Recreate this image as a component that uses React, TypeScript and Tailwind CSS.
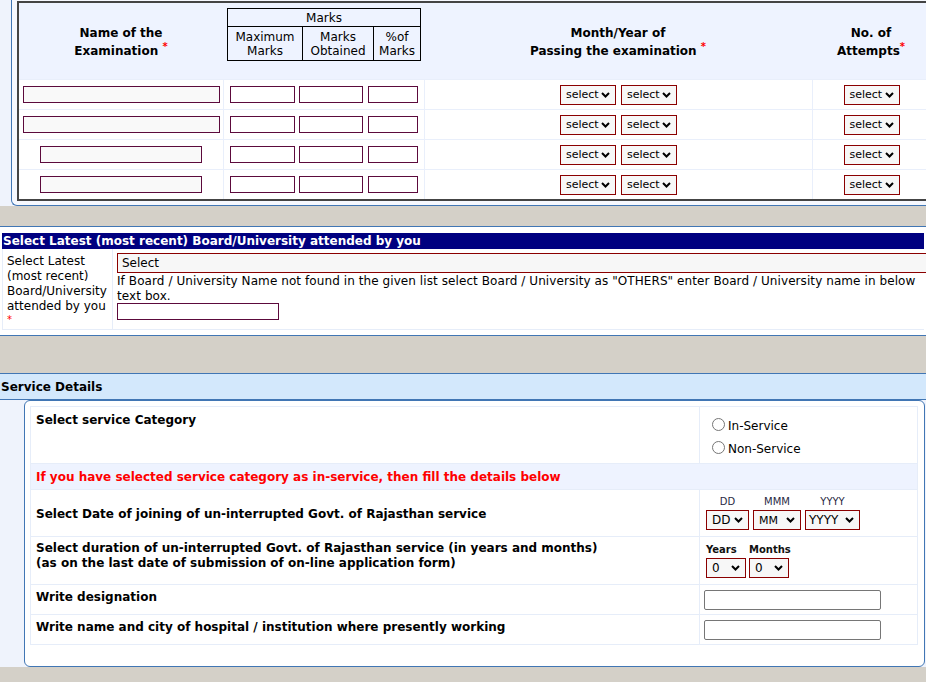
import React from 'react';

function Chev() {
  return (
    <svg width="9" height="6" viewBox="0 0 9 6" className="shrink-0">
      <path d="M1 1 L4.5 4.5 L8 1" fill="none" stroke="#000" strokeWidth="2" />
    </svg>
  );
}

function Sel({ text, className }: { text: string; className: string }) {
  return (
    <div
      className={`flex h-[20px] items-center justify-between border border-[#8b0000] bg-[#f7f7f7] pl-[5px] pr-[5px] leading-none text-black ${className}`}
    >
      <span>{text}</span>
      <Chev />
    </div>
  );
}

function Star({ className = '' }: { className?: string }) {
  return <span className={`relative -top-[5px] text-[10px] text-[#ff0000] ${className}`}>*</span>;
}

export default function App() {
  const rows = [0, 1, 2, 3];
  return (
    <div className="h-[682px] w-[926px] overflow-hidden bg-[#d4d0c8] font-['DejaVu_Sans',sans-serif] text-[12px] text-black">
      {/* Top examination table */}
      <div className="bg-[#eff3fc] pl-[11px]">
        <div className="rounded-bl-[6px] border-b border-l border-[#4176b4] bg-[#f6f8fe] pb-[4px] pl-[5px]">
          <div className="h-[1px]" />
          <div className="w-[915px] border-2 border-[#444] bg-white">
            <div className="grid h-[76px] grid-cols-[204px_201px_388px_118px] bg-[#eef3ff]">
              <div className="flex items-center justify-center pt-[2px] text-center font-bold leading-[18px]">
                <div>
                  Name of the
                  <br />
                  Examination <Star />
                </div>
              </div>
              <div>
                <div className="ml-[4px] mt-[5px] w-[194px] border border-black leading-[14px]">
                  <div className="h-[18px] border-b border-black pt-[1px] text-center leading-[17px]">Marks</div>
                  <div className="grid h-[33px] grid-cols-[75px_71px_1fr]">
                    <div className="border-r border-black pt-[3px] text-center">
                      Maximum
                      <br />
                      Marks
                    </div>
                    <div className="border-r border-black pt-[3px] text-center">
                      Marks
                      <br />
                      Obtained
                    </div>
                    <div className="pt-[3px] text-center">
                      %of
                      <br />
                      Marks
                    </div>
                  </div>
                </div>
              </div>
              <div className="flex items-center justify-center pt-[2px] text-center font-bold leading-[18px]">
                <div>
                  Month/Year of
                  <br />
                  Passing the examination <Star />
                </div>
              </div>
              <div className="flex items-center justify-center pt-[2px] text-center font-bold leading-[18px]">
                <div>
                  No. of
                  <br />
                  Attempts
                  <Star />
                </div>
              </div>
            </div>
            {rows.map((i) => (
              <div
                key={i}
                className="grid h-[30px] grid-cols-[204px_201px_388px_118px] border-t border-[#e9effb]"
              >
                <div className="flex items-center justify-center">
                  <div
                    className={
                      i < 2
                        ? 'h-[17px] w-[197px] border border-[#5c0a3c] bg-[#f9f9f9]'
                        : 'h-[17px] w-[162px] border border-[#5c0a3c] bg-[#f9f9f9]'
                    }
                  />
                </div>
                <div className="flex items-center border-l border-[#e9effb] pl-[6px]">
                  <div className="h-[17px] w-[65px] border border-[#5c0a3c] bg-white" />
                  <div className="ml-[4px] h-[17px] w-[64px] border border-[#5c0a3c] bg-white" />
                  <div className="ml-[5px] h-[17px] w-[50px] border border-[#5c0a3c] bg-white" />
                </div>
                <div className="flex items-center justify-center gap-[5px] border-l border-[#e9effb]">
                  <Sel text="select" className="w-[56px] text-[11px]" />
                  <Sel text="select" className="w-[56px] text-[11px]" />
                </div>
                <div className="flex items-center justify-center border-l border-[#e9effb]">
                  <Sel text="select" className="w-[56px] text-[11px]" />
                </div>
              </div>
            ))}
          </div>
        </div>
      </div>

      <div className="h-[20px]" />

      {/* Board / University */}
      <div className="border-y border-[#4176b4] bg-white px-[2px] pb-[5px] pt-[6px]">
        <div className="h-[16px] whitespace-nowrap bg-[#000080] pl-[1px] font-bold leading-[16px] text-white">
          Select Latest (most recent) Board/University attended by you
        </div>
        <div className="grid grid-cols-[110px_1fr] border-b border-l border-[#e6edf9]">
          <div className="h-[80px] border-r border-[#e6edf9] pl-[4px] pt-[5px] leading-[15px]">
            Select Latest
            <br />
            (most recent)
            <br />
            Board/University
            <br />
            attended by you
            <br />
            <span className="relative -top-[2px] text-[10px] text-[#ff0000]">*</span>
          </div>
          <div className="pl-[4px] pt-[4px]">
            <div className="h-[20px] w-[830px] border border-[#8b0000] bg-[#f7f7f7] pl-[4px] leading-[19px]">
              Select
            </div>
            <div className="relative top-[1px] whitespace-nowrap leading-[15px] tracking-[0.08px]">
              If Board / University Name not found in the given list select Board / University as "OTHERS" enter
              Board / University name in below
              <br />
              text box.
            </div>
            <div className="h-[17px] w-[162px] border border-[#5c0a3c] bg-white" />
          </div>
        </div>
      </div>

      <div className="h-[37px]" />

      {/* Service Details */}
      <div className="h-[27px] border-y border-[#4176b4] bg-[#d3e8fc] pl-[1px] pt-[1px] font-bold leading-[24px]">
        Service Details
      </div>
      <div className="bg-[#eff3fc] pl-[24px] pr-[1px]">
        <div className="rounded-[6px] border border-[#4176b4] bg-white pb-[21px] pl-[5px] pr-[6px] pt-[5px]">
          <div className="border-x border-t border-[#e6edf9]">
            {/* row 1 */}
            <div className="grid h-[57px] grid-cols-[668px_1fr] border-b border-[#e6edf9]">
              <div className="pl-[5px] pt-[6px] font-bold leading-[15px]">Select service Category</div>
              <div className="border-l border-[#e6edf9] pt-[6px]">
                <div className="flex h-[23px] items-center">
                  <span className="ml-[12px] h-[13px] w-[13px] rounded-full border border-[#767676] bg-white" />
                  <span className="ml-[3px] translate-y-[1px]">In-Service</span>
                </div>
                <div className="flex h-[23px] items-center">
                  <span className="ml-[12px] h-[13px] w-[13px] rounded-full border border-[#767676] bg-white" />
                  <span className="ml-[3px] translate-y-[1px]">Non-Service</span>
                </div>
              </div>
            </div>
            {/* row 2 */}
            <div className="flex h-[26px] items-center border-b border-[#e6edf9] bg-[#eef3ff] pl-[5px] pt-[1px] font-bold text-[#ff0000]">
              If you have selected service category as in-service, then fill the details below
            </div>
            {/* row 3 */}
            <div className="grid h-[47px] grid-cols-[668px_1fr] border-b border-[#e6edf9]">
              <div className="flex items-center pl-[5px] pt-[1px] font-bold">
                Select Date of joining of un-interrupted Govt. of Rajasthan service
              </div>
              <div className="flex gap-[4px] border-l border-[#e6edf9] pl-[6px] pt-[6px]">
                <div className="flex flex-col items-center">
                  <div className="text-[10px] leading-[12px] text-[#2a2a44]">DD</div>
                  <Sel text="DD" className="mt-[2px] w-[43px] text-[12px]" />
                </div>
                <div className="flex flex-col items-center">
                  <div className="text-[10px] leading-[12px] text-[#2a2a44]">MMM</div>
                  <Sel text="MM" className="mt-[2px] w-[48px] text-[11px]" />
                </div>
                <div className="flex flex-col items-center">
                  <div className="text-[10px] leading-[12px] text-[#2a2a44]">YYYY</div>
                  <Sel text="YYYY" className="mt-[2px] w-[55px] text-[12px] !pl-[3px]" />
                </div>
              </div>
            </div>
            {/* row 4 */}
            <div className="grid h-[48px] grid-cols-[668px_1fr] border-b border-[#e6edf9]">
              <div className="pl-[5px] pt-[4px] font-bold leading-[15px]">
                Select duration of un-interrupted Govt. of Rajasthan service (in years and months)
                <br />
                (as on the last date of submission of on-line application form)
              </div>
              <div className="flex gap-[3px] border-l border-[#e6edf9] pl-[6px] pt-[6px]">
                <div className="flex flex-col">
                  <div className="pt-[1px] text-[10px] font-bold leading-[12px] text-[#111]">Years</div>
                  <Sel text="0" className="mt-[2px] w-[40px] text-[12px]" />
                </div>
                <div className="flex flex-col">
                  <div className="pt-[1px] text-[10px] font-bold leading-[12px] text-[#111]">Months</div>
                  <Sel text="0" className="mt-[2px] w-[40px] text-[12px]" />
                </div>
              </div>
            </div>
            {/* row 5 */}
            <div className="grid h-[30px] grid-cols-[668px_1fr] border-b border-[#e6edf9]">
              <div className="pl-[5px] pt-[5px] font-bold leading-[15px]">Write designation</div>
              <div className="flex items-center border-l border-[#e6edf9] pl-[4px]">
                <div className="h-[20px] w-[177px] rounded-[2px] border border-[#767676] bg-white" />
              </div>
            </div>
            {/* row 6 */}
            <div className="grid h-[30px] grid-cols-[668px_1fr] border-b border-[#e6edf9]">
              <div className="pl-[5px] pt-[5px] font-bold leading-[15px]">
                Write name and city of hospital / institution where presently working
              </div>
              <div className="flex items-center border-l border-[#e6edf9] pl-[4px]">
                <div className="h-[20px] w-[177px] rounded-[2px] border border-[#767676] bg-white" />
              </div>
            </div>
          </div>
        </div>
      </div>
    </div>
  );
}
